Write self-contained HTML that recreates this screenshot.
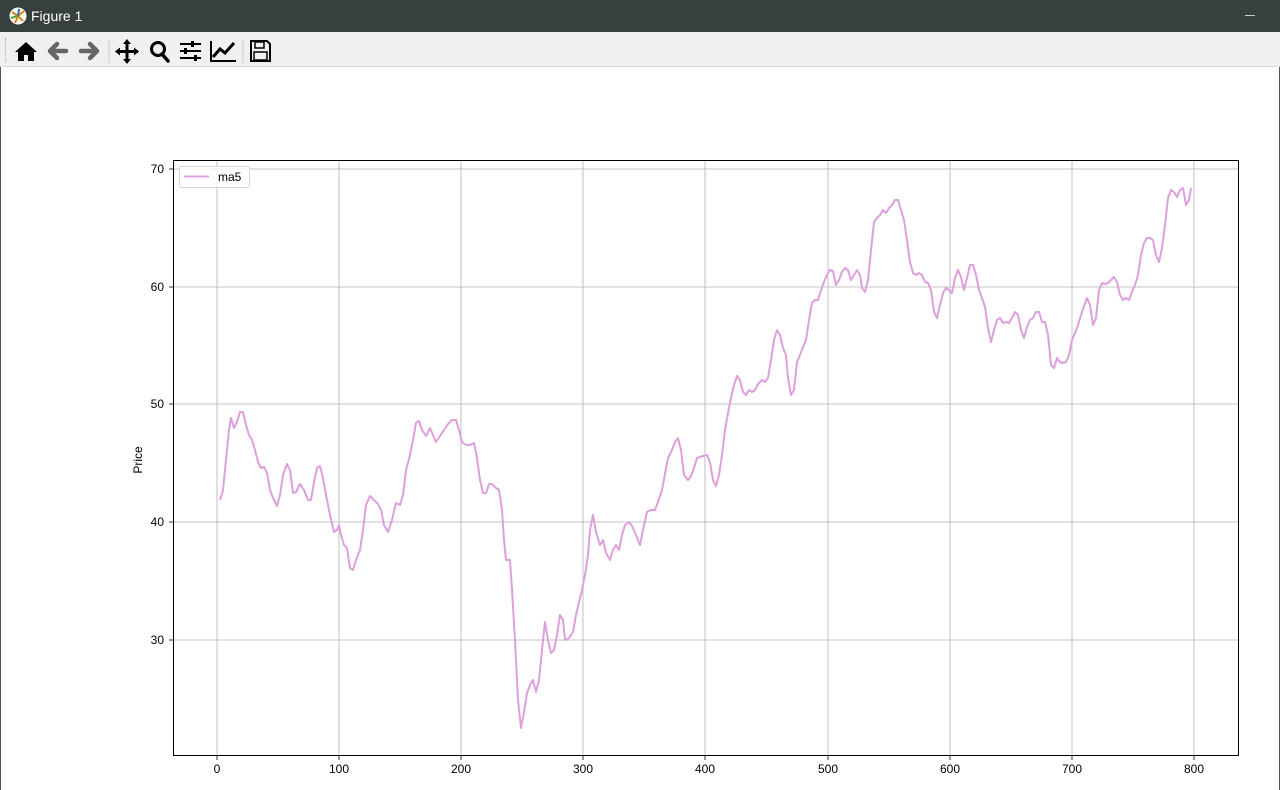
<!DOCTYPE html>
<html><head><meta charset="utf-8"><style>
html,body{margin:0;padding:0;width:1280px;height:790px;overflow:hidden;background:#fff;font-family:"Liberation Sans","DejaVu Sans",sans-serif}
.title{position:absolute;left:0;top:0;width:1280px;height:32px;background:#373f3f;color:#fff;font-size:14px}
.tb{position:absolute;left:0;top:32px;width:1280px;height:34px;background:#f0f0f0;border-bottom:1px solid #d8d8d8}
.win{position:absolute;left:0;top:67px;width:1278px;height:723px;border-left:1px solid #555;border-right:1px solid #555}
</style></head><body>
<div class="title">
<svg style="position:absolute;left:9px;top:7px" width="18" height="18" viewBox="0 0 18 18"><circle cx="9" cy="9" r="8.5" fill="#fff"/><path d="M9 9L3 5M9 9L6 16M9 9L15 4M9 9L14 14" stroke="#e0801c" stroke-width="2"/><path d="M9 9L10 2" stroke="#2d6ea8" stroke-width="2"/><path d="M9 9L2 11" stroke="#5aa840" stroke-width="2"/></svg>
<span style="position:absolute;left:31px;top:8px">Figure 1</span>
<div style="position:absolute;left:1245px;top:15px;width:10px;height:1px;background:#ccc"></div>
</div>
<div class="tb">
<div style="position:absolute;left:5px;top:6px;width:1px;height:24px;border-left:1px dotted #aaa"></div>
<svg width="280" height="34" viewBox="0 0 280 34" style="position:absolute;left:0;top:0">
<g fill="#000">
<path d="M26 10L15 20h3v9h6v-6h4v6h6v-9h3z"/>
</g>
<path d="M66 19H51M57 12l-7 7 7 7" stroke="#666" stroke-width="4.5" fill="none" stroke-linecap="round" stroke-linejoin="round"/>
<path d="M81 19h15M90 12l7 7-7 7" stroke="#666" stroke-width="4.5" fill="none" stroke-linecap="round" stroke-linejoin="round"/>
<line x1="109" y1="7" x2="109" y2="31" stroke="#ccc"/>
<path d="M127 9v21M117 19.5h21" stroke="#000" stroke-width="3"/>
<path d="M127 7l-4 5h8zM127 32l-4-5h8zM115 19.5l5-4v8zM139 19.5l-5-4v8z" fill="#000"/>
<circle cx="158" cy="17" r="6.5" stroke="#000" stroke-width="3" fill="none"/>
<path d="M162 22l6 7" stroke="#000" stroke-width="3.5" stroke-linecap="round"/>
<path d="M180 12h21M180 19h21M180 26h21" stroke="#000" stroke-width="2"/>
<rect x="191" y="9" width="3" height="6" fill="#000"/><rect x="184" y="16" width="3" height="6" fill="#000"/><rect x="194" y="23" width="3" height="6" fill="#000"/>
<path d="M211 9v20h25" stroke="#000" stroke-width="2" fill="none"/>
<path d="M213 25l7-8 5 4 9-10" stroke="#000" stroke-width="3" fill="none"/>
<line x1="243" y1="7" x2="243" y2="31" stroke="#ccc"/>
<path d="M251 9h16l3 3v17h-19z" stroke="#000" stroke-width="2" fill="none"/>
<rect x="255" y="10" width="9" height="6" stroke="#000" stroke-width="1.5" fill="none"/>
<rect x="254" y="20" width="13" height="8" stroke="#000" stroke-width="1.5" fill="none"/>
</svg>
</div>
<div class="win"></div>
<svg width="1280" height="790" style="position:absolute;left:0;top:0" font-family="Liberation Sans, DejaVu Sans, sans-serif" font-size="12">
<g stroke="#b0b0b0" stroke-width="0.8">
<line x1="217" y1="160" x2="217" y2="756"/><line x1="339" y1="160" x2="339" y2="756"/><line x1="461" y1="160" x2="461" y2="756"/><line x1="583" y1="160" x2="583" y2="756"/><line x1="705" y1="160" x2="705" y2="756"/><line x1="828" y1="160" x2="828" y2="756"/><line x1="950" y1="160" x2="950" y2="756"/><line x1="1072" y1="160" x2="1072" y2="756"/><line x1="1194" y1="160" x2="1194" y2="756"/>
<line x1="173" y1="169" x2="1239" y2="169"/><line x1="173" y1="287" x2="1239" y2="287"/><line x1="173" y1="404" x2="1239" y2="404"/><line x1="173" y1="522" x2="1239" y2="522"/><line x1="173" y1="640" x2="1239" y2="640"/>
</g>
<g stroke="#000" stroke-width="0.8">
<line x1="217" y1="756" x2="217" y2="760"/><line x1="339" y1="756" x2="339" y2="760"/><line x1="461" y1="756" x2="461" y2="760"/><line x1="583" y1="756" x2="583" y2="760"/><line x1="705" y1="756" x2="705" y2="760"/><line x1="828" y1="756" x2="828" y2="760"/><line x1="950" y1="756" x2="950" y2="760"/><line x1="1072" y1="756" x2="1072" y2="760"/><line x1="1194" y1="756" x2="1194" y2="760"/>
<line x1="169" y1="169" x2="173" y2="169"/><line x1="169" y1="287" x2="173" y2="287"/><line x1="169" y1="404" x2="173" y2="404"/><line x1="169" y1="522" x2="173" y2="522"/><line x1="169" y1="640" x2="173" y2="640"/>
</g>
<polyline fill="none" stroke="#dda0dd" stroke-width="2" stroke-linejoin="round" points="220,500 223,490 226,460 229,430 231,418 234,428 237,422 240,412 243,412 246,425 249,435 252,440 255,450 258,462 261,468 264,467 267,473 270,490 273,498 277,506 280,495 283,475 287,464 290,470 293,493 296,492 300,484 304,490 308,500 311,500 314,482 317,468 320,466 323,478 326,495 330,515 334,532 337,530 339,525 341,535 344,545 347,548 350,568 353,570 356,560 360,550 363,530 366,505 370,496 374,500 378,504 381,510 384,525 388,532 392,520 396,503 400,505 403,495 406,470 410,455 413,440 416,423 419,421 422,430 426,436 430,428 433,435 436,442 440,436 444,430 448,424 452,420 456,420 459,430 462,442 466,445 470,445 474,443 477,458 480,480 483,493 486,493 489,484 492,484 496,488 499,490 502,510 504,540 506,560 510,560 512,590 515,640 518,700 521,728 524,712 527,693 530,685 533,680 536,692 539,680 542,650 545,622 548,640 551,653 554,650 557,635 560,615 563,620 565,640 569,638 573,632 576,615 579,602 582,590 585,575 588,555 590,530 593,515 596,532 600,545 603,540 606,553 610,560 613,550 616,545 619,550 622,535 625,525 629,522 632,526 636,535 640,545 643,530 647,512 651,510 655,510 658,502 662,490 665,474 668,458 672,450 675,442 678,438 681,450 684,475 688,480 691,476 694,468 697,458 700,457 703,456 707,455 710,462 713,480 716,486 719,475 722,455 725,430 728,413 731,398 734,385 737,376 740,380 743,392 746,395 749,390 752,392 755,390 758,384 762,380 765,382 768,378 771,360 774,340 777,330 780,335 783,348 786,355 788,378 791,395 794,390 797,362 800,355 803,347 806,340 809,320 812,303 815,300 818,300 821,290 824,282 827,275 830,270 833,271 836,285 839,280 842,272 845,268 848,270 851,280 854,275 857,270 860,275 862,288 865,292 868,280 871,250 874,222 877,218 880,215 883,210 886,213 889,208 892,205 895,200 898,200 901,210 904,220 907,240 910,262 913,273 916,275 919,273 922,275 925,282 928,283 931,290 934,312 937,318 940,305 943,293 946,288 949,290 952,293 955,278 958,270 961,277 964,290 967,278 970,265 973,265 976,275 979,290 982,298 985,307 988,328 991,342 994,330 997,320 1000,318 1003,323 1006,322 1009,323 1012,318 1015,312 1018,315 1021,330 1024,338 1027,327 1030,320 1033,318 1036,312 1039,312 1042,322 1045,322 1048,335 1051,365 1054,368 1057,358 1060,362 1063,363 1066,362 1069,355 1072,340 1075,333 1078,325 1081,315 1084,306 1087,298 1090,305 1093,325 1096,318 1099,290 1102,283 1105,284 1108,283 1111,280 1114,277 1117,282 1120,295 1123,300 1126,298 1129,300 1132,292 1135,285 1138,275 1141,255 1144,243 1147,238 1150,238 1153,240 1156,255 1159,262 1162,248 1165,225 1168,198 1171,190 1174,192 1177,197 1180,190 1183,188 1186,205 1189,200 1191,188"/>
<rect x="173.5" y="160.5" width="1065" height="595" fill="none" stroke="#000" stroke-width="1"/>
<rect x="179.5" y="166.5" width="70" height="21" rx="2" fill="#fff" fill-opacity="0.8" stroke="#d6d6d6"/>
<line x1="184" y1="176.5" x2="209" y2="176.5" stroke="#dda0dd" stroke-width="2"/>
<text x="218" y="181" fill="#000">ma5</text>
<g fill="#000" text-anchor="end">
<text x="164" y="173">70</text><text x="164" y="291">60</text><text x="164" y="408">50</text><text x="164" y="526">40</text><text x="164" y="644">30</text>
</g>
<g fill="#000" text-anchor="middle">
<text x="217" y="773">0</text><text x="339" y="773">100</text><text x="461" y="773">200</text><text x="583" y="773">300</text><text x="705" y="773">400</text><text x="828" y="773">500</text><text x="950" y="773">600</text><text x="1072" y="773">700</text><text x="1194" y="773">800</text>
<text transform="translate(142,460) rotate(-90)">Price</text>
</g>
</svg>
</body></html>
